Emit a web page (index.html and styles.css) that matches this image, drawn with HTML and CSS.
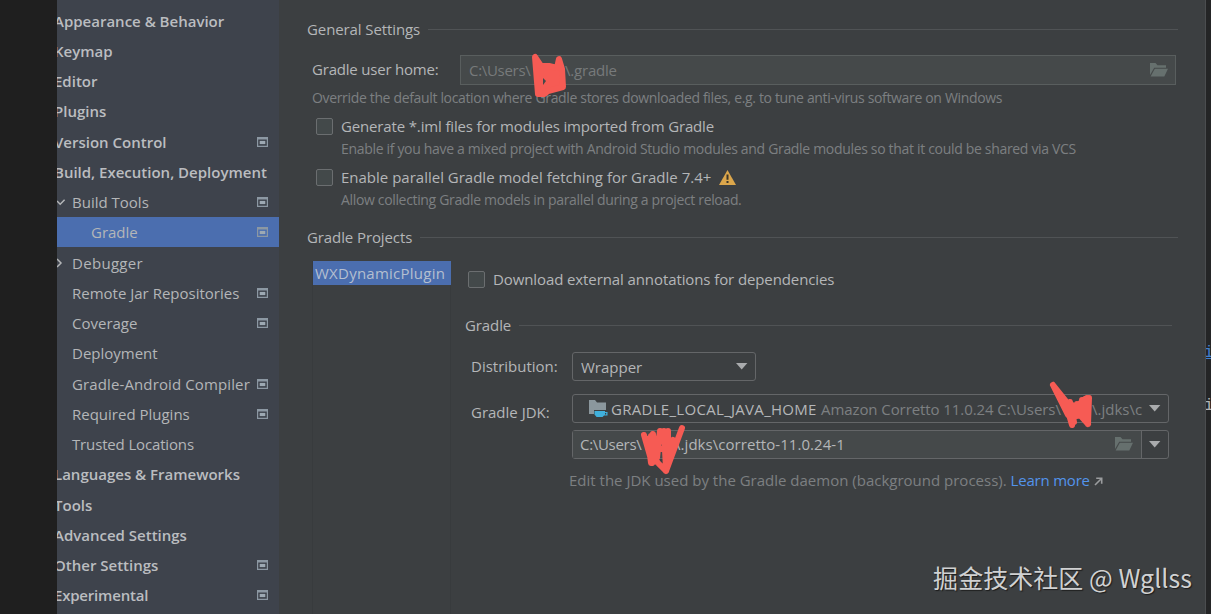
FILE: index.html
```html
<!DOCTYPE html>
<html lang="en">
<head>
    <meta charset="utf-8">
    <title>Settings - Gradle</title>
    <link rel="stylesheet" href="styles.css">
</head>
<body>
    <svg class="defs" width="0" height="0">
        <symbol id="project" viewBox="0 0 11 10">
            <path d="M0 0h11v10H0zM1.2 2.4v6.4h8.6V2.4z" fill="#8c98a3" fill-rule="evenodd"/>
            <path d="M2.7 3.9h5.6v3.2H2.7z" fill="#9da9b3"/>
        </symbol>
        <symbol id="folder" viewBox="0 0 18 14">
            <path d="M0 12V0h5.5l2 2.2H16v2.6H4.2L0 12z"/>
            <path d="M4.8 5.8H18L14.3 13.4H.6z"/>
        </symbol>
        <symbol id="arrow" viewBox="0 0 12 7">
            <path d="M0 0h11.4L5.7 6.6z" fill="#a9abad"/>
        </symbol>
    </svg>

    <div class="window">
        <div class="gutter"></div>
        <ul class="sidebar">
            <li class="group"><span>Appearance &amp; Behavior</span></li>
            <li class="group"><span>Keymap</span></li>
            <li class="group"><span>Editor</span></li>
            <li class="group"><span>Plugins</span></li>
            <li class="group"><span>Version Control</span><svg class="badge"><use href="#project"/></svg></li>
            <li class="group"><span>Build, Execution, Deployment</span></li>
            <li class="item"><svg class="chevron" viewBox="0 0 9 10"><path d="M0 4l3.2 3.2L7.6 2.8"/></svg><span>Build Tools</span><svg class="badge"><use href="#project"/></svg></li>
            <li class="item nested selected"><span>Gradle</span><svg class="badge"><use href="#project"/></svg></li>
            <li class="item"><svg class="chevron" viewBox="0 0 9 10"><path d="M0 1l4 4-4 4"/></svg><span class="debugger">Debugger</span></li>
            <li class="item"><span>Remote Jar Repositories</span><svg class="badge"><use href="#project"/></svg></li>
            <li class="item"><span>Coverage</span><svg class="badge"><use href="#project"/></svg></li>
            <li class="item"><span>Deployment</span></li>
            <li class="item"><span class="compiler">Gradle-Android Compiler</span><svg class="badge"><use href="#project"/></svg></li>
            <li class="item"><span>Required Plugins</span><svg class="badge"><use href="#project"/></svg></li>
            <li class="item"><span class="trusted">Trusted Locations</span></li>
            <li class="group"><span>Languages &amp; Frameworks</span></li>
            <li class="group"><span>Tools</span></li>
            <li class="group"><span>Advanced Settings</span></li>
            <li class="group"><span>Other Settings</span><svg class="badge"><use href="#project"/></svg></li>
            <li class="group"><span class="experimental">Experimental</span><svg class="badge"><use href="#project"/></svg></li>
        </ul>

        <div class="content">
            <div class="title">General Settings</div>
            <div class="home-row">
                <label>Gradle user home:</label>
                <div class="field disabled">
                    <span class="users">C:\Users\</span><span class="home-end">\.gradle</span>
                    <svg class="folder"><use href="#folder"/></svg>
                </div>
            </div>
            <p class="hint home-hint">Override the default location where Gradle stores downloaded files, e.g. to tune anti-virus software on Windows</p>
            <div class="check"><i class="box"></i><span class="iml">Generate *.iml files for modules imported from Gradle</span></div>
            <p class="hint check-hint vcs">Enable if you have a mixed project with Android Studio modules and Gradle modules so that it could be shared via VCS</p>
            <div class="check">
                <i class="box"></i><span>Enable parallel Gradle model fetching for Gradle 7.4+</span>
                <svg class="warning" viewBox="0 0 17 15"><path d="M8.5 0L17 15H0z" fill="#dba64b"/><path d="M7.5 4.6h2v5.2h-2zM7.5 11h2v2h-2z" fill="#3c3529"/></svg>
            </div>
            <p class="hint check-hint">Allow collecting Gradle models in parallel during a project reload.</p>

            <div class="title projects-title">Gradle Projects</div>
            <div class="projects">
                <div class="project-list"><div class="project">WXDynamicPlugin</div></div>
                <div class="project-settings">
                    <div class="check download"><i class="box"></i><span>Download external annotations for dependencies</span></div>
                    <div class="title gradle-title">Gradle</div>
                    <div class="row">
                        <label>Distribution:</label>
                        <div class="combo distribution"><span>Wrapper</span><svg class="arrow"><use href="#arrow"/></svg></div>
                    </div>
                    <div class="row jdk-row">
                        <label>Gradle JDK:</label>
                        <div class="combo jdk">
                            <svg class="jdk-icon" viewBox="0 0 19 18"><path d="M0 14V0h6l2 2.5h9V10H5v4z" fill="#8b979d"/><path d="M5.5 11H16v1h2.5v3.4H15l-1.4 1.6h-6L5.5 14.6zM16 13v1.4h1.2V13z" fill="#40b0dc" fill-rule="evenodd"/></svg>
                            <span class="jdk-name">GRADLE_LOCAL_JAVA_HOME</span>
                            <span class="jdk-version">Amazon Corretto 11.0.24 C:\Users\</span><span class="jdk-path">\.jdks\c</span>
                            <svg class="arrow"><use href="#arrow"/></svg>
                        </div>
                    </div>
                    <div class="combo path">
                        <div class="path-text">
                            <span class="users">C:\Users\</span><span class="path-end">\.jdks\corretto-11.0.24-1</span>
                            <svg class="folder"><use href="#folder"/></svg>
                        </div>
                        <svg class="arrow"><use href="#arrow"/></svg>
                    </div>
                    <p class="hint daemon">Edit the JDK used by the Gradle daemon (background process). <a>Learn more</a>
                        <svg class="external" viewBox="0 0 9 9"><path d="M1 8L7 2M2.2 1.3h5.5v5.5"/></svg></p>
                </div>
            </div>
        </div>
        <div class="editor"><span class="code link">i</span><span class="code">i</span></div>
    </div>

    <!-- marker strokes hiding the user name -->
    <svg class="marker" viewBox="0 0 1211 614">
        <path class="fill" d="M535 57l3 37 6 0 4-3 15-4-1-18-3-10-2 9-8-2-8 0z"/>
        <path class="gap" d="M543 78l3 3-3 4z"/>
        <path d="M644 435l8 28M648 439l3 24M653 434l4 28M660 431l-3 27M664 431l2 38M668 431v30M682 428l-16 43M655 460l11 11M656 440h12M655 449h15M651 436v16M673 440l-6 12"/>
        <path d="M1053 385l15 30M1053 385l16 20M1065 401l7 24M1070 402l4 20M1077 404v12M1082 400v16M1087 398l-1 22M1089 398l-1 26M1070 412h17M1071 418l9-3 8 9M1076 407l9-8M1068 405h4"/>
    </svg>
    <div class="watermark">掘金技术社区 @ Wgllss</div>
</body>
</html>
```
FILE: styles.css
```css
body {
    margin: 0;
    font-family: "Open Sans", "Noto Sans", sans-serif;
    font-size: 15px;
    color: #b4b6b8;
    background: #3c3f41;
    overflow: hidden;
}
.defs {
    position: absolute;
}
.window {
    display: flex;
    height: 614px;
}
.gutter {
    width: 57px;
    background: #1f1f1f;
}

/* sidebar */
.sidebar {
    width: 222px;
    height: 608.6px;
    margin: 0;
    padding: 5.4px 0 0;
    list-style: none;
    background: #3e434c;
    overflow: hidden;
}
.sidebar li {
    display: flex;
    align-items: center;
    position: relative;
    box-sizing: border-box;
    height: 30.25px;
    padding-right: 11px;
    white-space: nowrap;
}
.group {
    font-weight: 600;
    color: #bbbdc0;
}
.group span {
    margin-left: -3px;
}
.experimental {
    letter-spacing: -0.2px;
}
.item {
    padding-left: 15px;
}
.debugger {
    letter-spacing: 0.3px;
}
.compiler {
    letter-spacing: 0.12px;
}
.trusted {
    letter-spacing: -0.15px;
}
.nested {
    padding-left: 34px;
}
.selected {
    background: #4b6eaf;
}
.badge {
    width: 11px;
    height: 10px;
    margin-left: auto;
}
.chevron {
    position: absolute;
    left: 0;
    width: 9px;
    height: 10px;
    fill: none;
    stroke: #b4b6b8;
    stroke-width: 1.5;
}

/* content */
.content {
    box-sizing: border-box;
    width: 927px;
    padding: 18px 27px 0 28px;
    white-space: nowrap;
    border-right: 1px solid #4b4d4f;
}
.title {
    display: flex;
    align-items: center;
    height: 22px;
    letter-spacing: -0.1px;
}
.title::after {
    content: "";
    flex: 1;
    height: 1px;
    margin-left: 8px;
    background: #505355;
}
.home-row {
    display: flex;
    align-items: center;
    margin: 15px 2px 0 5px;
}
.home-row label {
    width: 148px;
    padding-bottom: 2px;
    letter-spacing: -0.2px;
}
.field {
    display: flex;
    align-items: center;
    box-sizing: border-box;
    flex: 1;
    height: 30px;
    padding: 0 7px 0 8px;
    border: 1px solid #595e5e;
    background: #45494a;
}
.disabled {
    color: #777a7b;
}
.users {
    width: 64px;
    letter-spacing: -0.3px;
}
.home-end {
    margin-left: 32px;
    letter-spacing: -0.2px;
}
.folder {
    width: 18px;
    height: 14px;
    margin-left: auto;
    fill: #66706e;
}
.hint {
    height: 20px;
    margin: 3px 0 0;
    line-height: 20px;
    font-size: 14px;
    letter-spacing: -0.34px;
    color: #7c7f81;
}
.home-hint {
    margin: 3px 0 0 5px;
}
.check-hint {
    margin-left: 34px;
}
.vcs {
    letter-spacing: -0.32px;
}
.check {
    display: flex;
    align-items: center;
    height: 20px;
    margin: 8px 0 0 9px;
}
.iml {
    letter-spacing: -0.15px;
}
.box {
    box-sizing: border-box;
    width: 17px;
    height: 17px;
    margin-right: 8px;
    border: 1px solid #6b6e70;
    border-radius: 2px;
    background: #43494a;
}
.warning {
    width: 17px;
    height: 15px;
    margin-left: 8px;
}
.projects-title {
    margin-top: 16px;
}

/* gradle projects */
.projects {
    display: flex;
    margin-top: 13px;
}
.project-list {
    box-sizing: border-box;
    width: 139px;
    height: 353px;
    margin-left: 5px;
    border-right: 1px solid #383b3d;
    border-left: 1px solid #383b3d;
}
.project {
    height: 24px;
    margin-right: -1px;
    padding-left: 2px;
    line-height: 24px;
    letter-spacing: 0.25px;
    color: #b4bfd0;
    background: #4b6eaf;
}
.project-settings {
    flex: 1;
    padding: 8px 6px 0 14px;
}
.download {
    margin: 0 0 0 3px;
    letter-spacing: -0.1px;
}
.gradle-title {
    margin-top: 25px;
}
.row {
    display: flex;
    align-items: center;
    margin: 16px 3px 0 6px;
}
.row label {
    width: 101px;
    padding-bottom: 2px;
}
.combo {
    display: flex;
    align-items: center;
    box-sizing: border-box;
    height: 29px;
    padding: 0 7px 0 8px;
    border: 1px solid #646668;
    border-radius: 3px;
}
.combo .arrow {
    width: 12px;
    height: 7px;
    margin-left: auto;
}
.distribution {
    width: 184px;
}
.jdk-row {
    margin-top: 13px;
}
.jdk-row label {
    padding: 6px 0 0;
}
.jdk {
    flex: 1;
    padding-left: 16px;
}
.jdk-icon {
    width: 19px;
    height: 18px;
    margin-right: 3px;
}
.jdk-name {
    width: 206px;
    letter-spacing: 0.3px;
}
.jdk-version, .jdk-path {
    color: #7c7f81;
}
.jdk-version {
    width: 241px;
    margin-left: 4px;
    letter-spacing: -0.08px;
}
.jdk-path {
    margin-left: 30px;
    letter-spacing: 0;
}
.path {
    margin: 7px 3px 0 107px;
    padding-left: 0;
}
.path-text {
    display: flex;
    align-items: center;
    flex: 1;
    height: 27px;
    margin-right: 7px;
    padding: 0 8px 1px 7px;
    box-sizing: border-box;
    border-right: 1px solid #646668;
    background: #45494a;
}
.path-end {
    margin-left: 31px;
    letter-spacing: 0.05px;
}
.daemon {
    margin: 11px 0 0 104px;
    font-size: 15px;
    letter-spacing: 0;
}
.daemon a {
    color: #5394ec;
    letter-spacing: -0.2px;
}
.external {
    width: 9px;
    height: 9px;
    fill: none;
    stroke: #9a9c9e;
    stroke-width: 1.6;
}

/* editor behind the dialog */
.editor {
    display: flex;
    flex-direction: column;
    gap: 33px;
    flex: 1;
    padding-top: 343px;
    background: #242526;
    overflow: hidden;
}
.code {
    height: 20px;
    line-height: 20px;
    font-family: "Liberation Mono", monospace;
    font-size: 16px;
    margin-left: -2px;
}
.link {
    color: #3f7fd0;
    text-decoration: underline;
}

.marker {
    position: absolute;
    left: 0;
    top: 0;
    width: 1211px;
    height: 614px;
    fill: none;
    stroke: #f65b54;
    stroke-width: 6;
    stroke-linecap: round;
    stroke-linejoin: round;
}
.marker .fill {
    fill: #f65b54;
}
.marker .gap {
    fill: #45494a;
    stroke: none;
}
.watermark {
    position: absolute;
    right: 19px;
    bottom: 19px;
    font-family: "Noto Sans CJK SC", sans-serif;
    font-size: 25px;
    line-height: 36px;
    letter-spacing: 0.05px;
    color: #d0d1d2;
    text-shadow: 1px 1px 1px #1c1c1c;
}
```
